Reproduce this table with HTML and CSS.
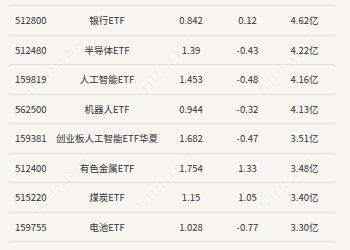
FILE: index.html
```html
<!DOCTYPE html>
<html lang="zh">
<head>
<meta charset="utf-8">
<link rel="stylesheet" href="styles.css">
</head>
<body>
<div class="page">
  <div class="table">
    <div class="row"><span class="code">512800</span><span>银行ETF</span><span>0.842</span><span>0.12</span><span>4.62亿</span></div>
    <div class="row"><span class="code">512480</span><span>半导体ETF</span><span>1.39</span><span>-0.43</span><span>4.22亿</span></div>
    <div class="row"><span class="code">159819</span><span>人工智能ETF</span><span>1.453</span><span>-0.48</span><span>4.16亿</span></div>
    <div class="row"><span class="code">562500</span><span>机器人ETF</span><span>0.944</span><span>-0.32</span><span>4.13亿</span></div>
    <div class="row"><span class="code">159381</span><span>创业板人工智能ETF华夏</span><span>1.682</span><span>-0.47</span><span>3.51亿</span></div>
    <div class="row"><span class="code">512400</span><span>有色金属ETF</span><span>1.754</span><span>1.33</span><span>3.48亿</span></div>
    <div class="row"><span class="code">515220</span><span>煤炭ETF</span><span>1.15</span><span>1.05</span><span>3.40亿</span></div>
    <div class="row"><span class="code">159755</span><span>电池ETF</span><span>1.028</span><span>-0.77</span><span>3.30亿</span></div>
  </div>
  <div class="wm wm1">每日经济新闻</div>
  <div class="wm wm2">每日经济新闻</div>
  <div class="wm wm3">每日经济新闻</div>
  <div class="wm wm4">每日经济新闻</div>
  <div class="wm wm5">每日经济新闻</div>
  <div class="wm wm6">每日经济新闻</div>
</div>
</body>
</html>
```
FILE: styles.css
```css
html, body {
  margin: 0;
  padding: 0;
  background: #f8f6f1;
}
.page {
  position: relative;
  width: 350px;
  height: 250px;
  overflow: hidden;
  padding-top: 5px;
  box-sizing: border-box;
}
.table {
  margin-left: 9px;
  width: 326px;
  border-top: 1px solid #e2dfd9;
  font-family: "Noto Sans CJK SC", "Noto Sans", sans-serif;
  font-size: 9.5px;
  color: #333;
}
.row {
  display: grid;
  grid-template-columns: 44px 108px 60px 53px 61px;
  height: 28.5px;
  align-items: center;
  justify-items: center;
  border-bottom: 1px solid #e2dfd9;
  white-space: nowrap;
}
.row .code {
  justify-self: start;
  padding-left: 6px;
}
.wm {
  position: absolute;
  font-family: "Noto Serif CJK SC", "Noto Sans CJK SC", serif;
  font-size: 11px;
  letter-spacing: 2px;
  color: rgba(0, 0, 0, 0.045);
  transform: translate(-50%, -50%) rotate(-45deg);
  white-space: nowrap;
  font-weight: bold;
}
.wm1 { left: 55px; top: 66px; }
.wm2 { left: 165px; top: 66px; }
.wm3 { left: 287px; top: 65px; }
.wm4 { left: 60px; top: 184px; }
.wm5 { left: 165px; top: 180px; }
.wm6 { left: 288px; top: 180px; }
```
